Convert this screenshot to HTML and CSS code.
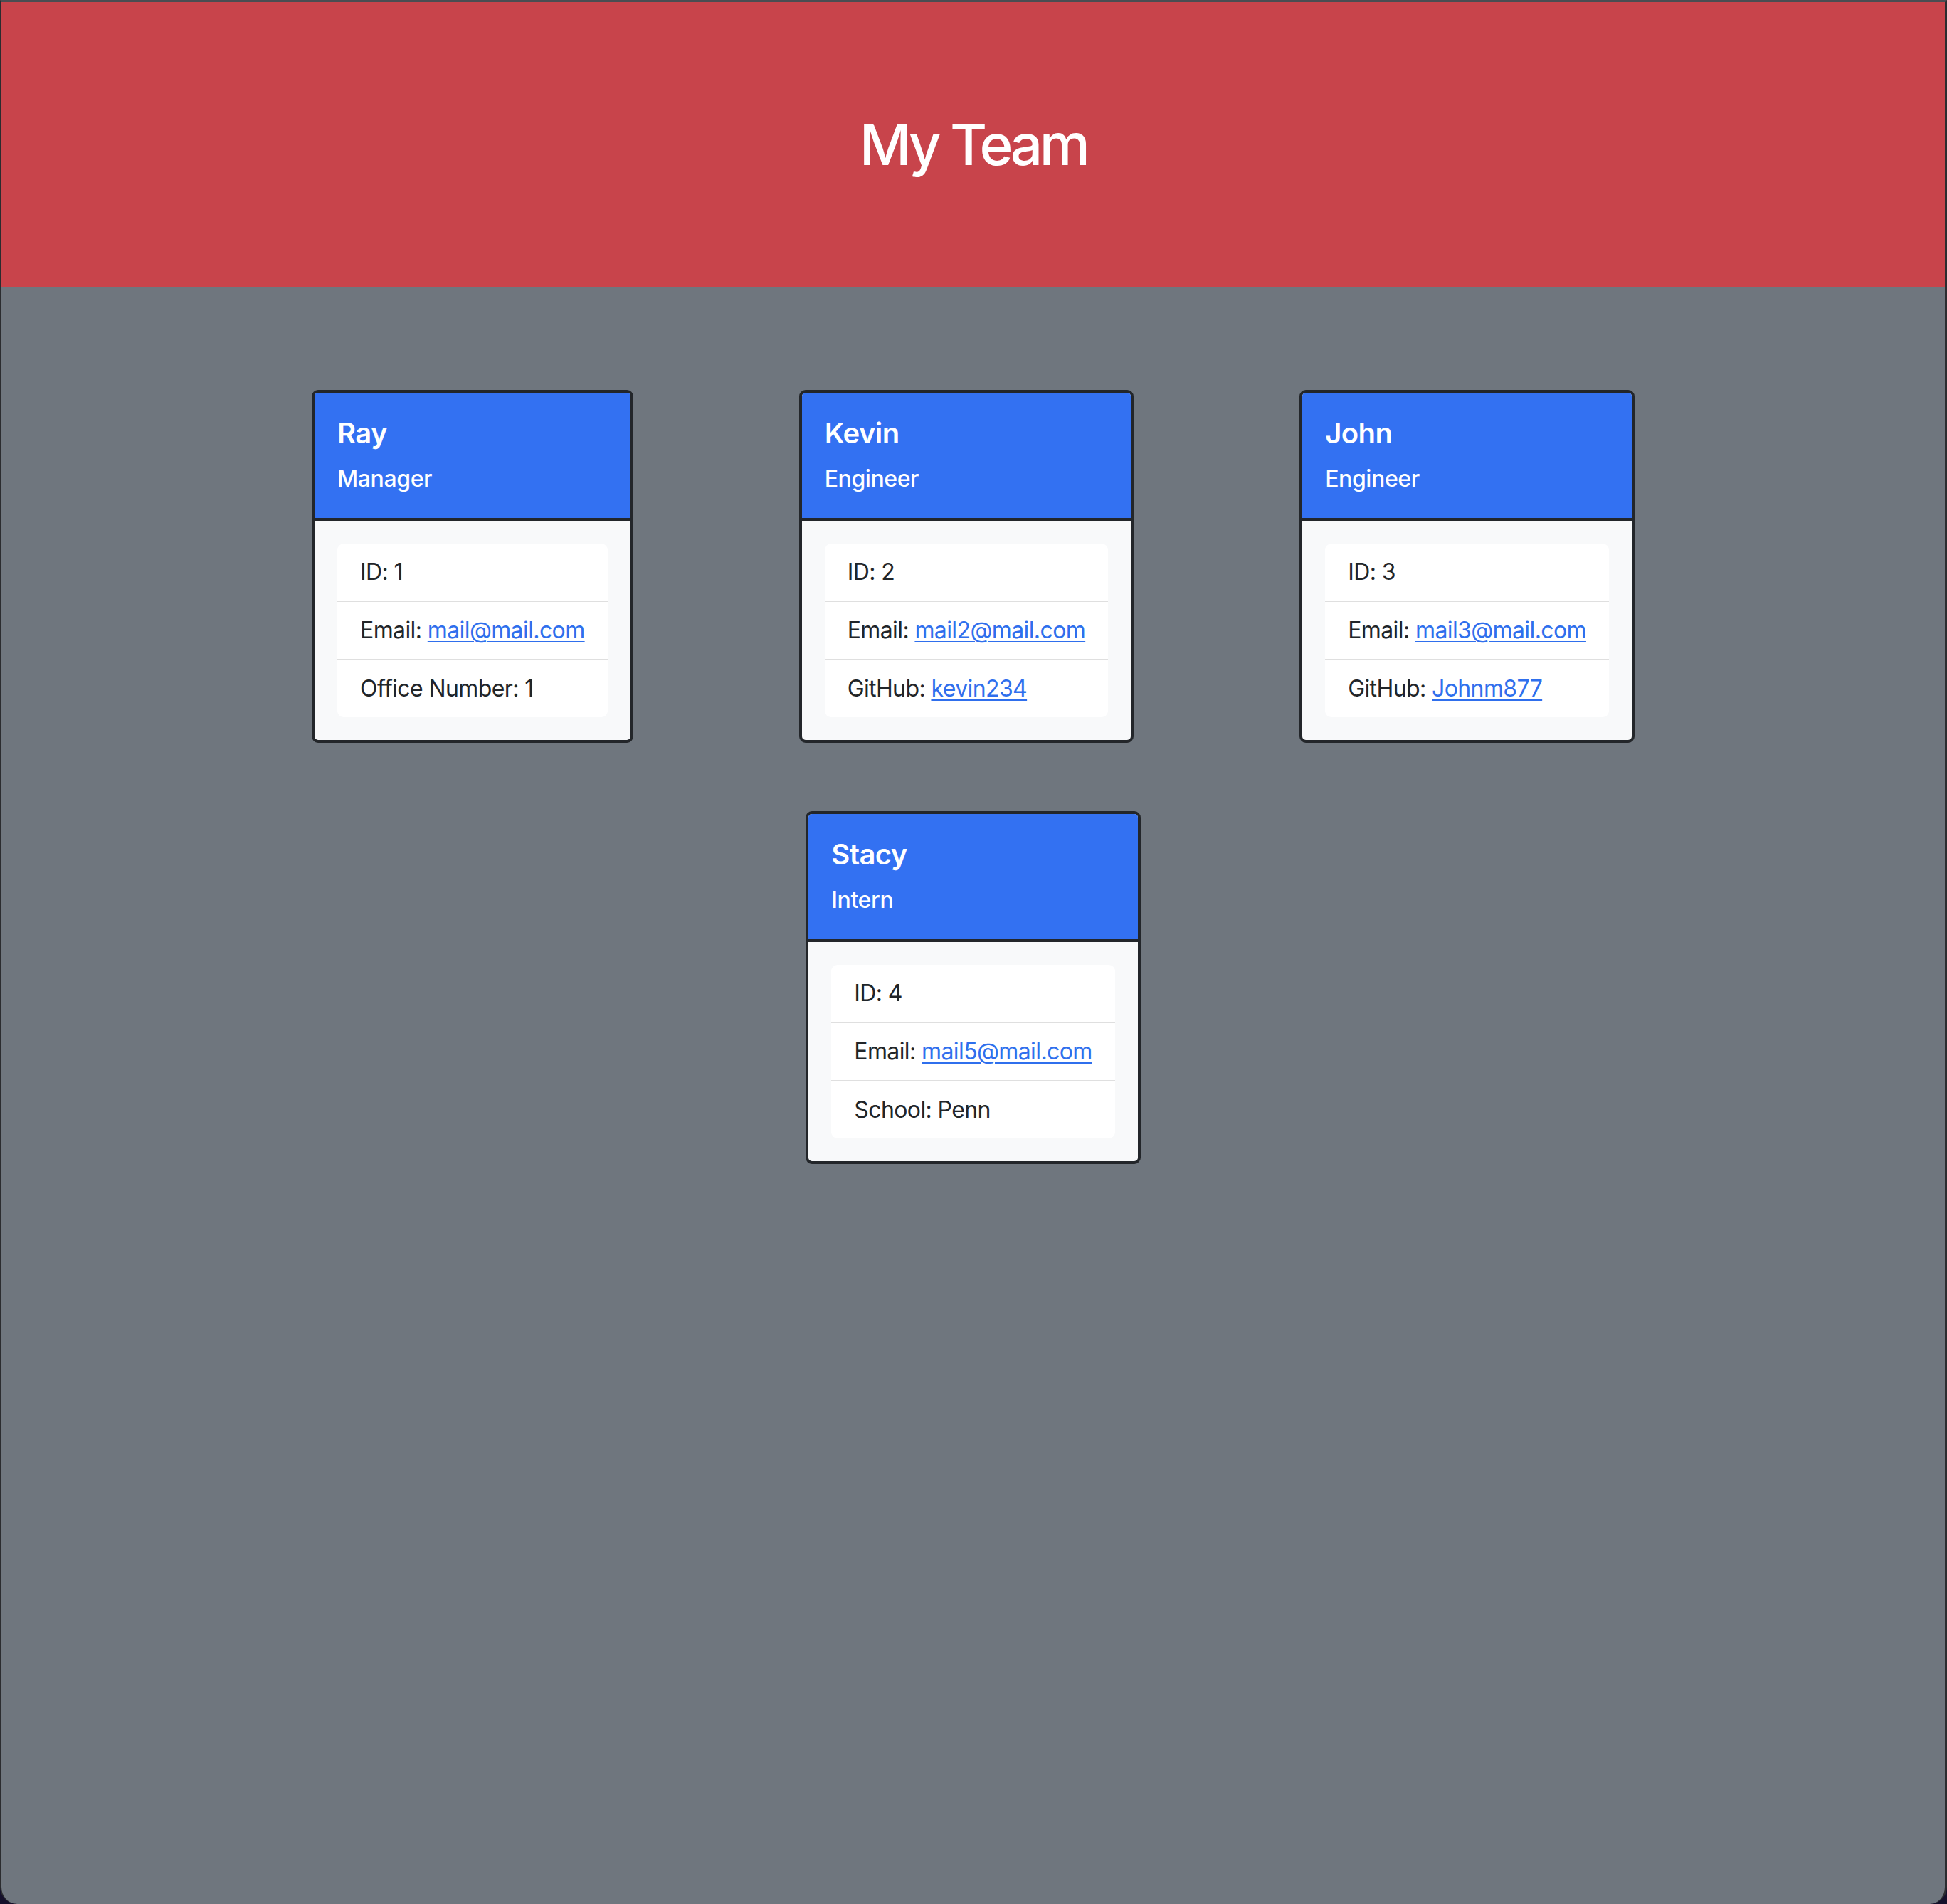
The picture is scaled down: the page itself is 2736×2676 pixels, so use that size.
FILE: index.html
```html
<!DOCTYPE html>
<html lang="en">
<head>
<meta charset="utf-8">
<title>My Team</title>
<link rel="stylesheet" href="styles.css">
</head>
<body>
<div class="window">
  <header class="hero">
    <h1 class="hero-title">My Team</h1>
  </header>
  <main class="team">
    <div class="card">
      <div class="card-header">
        <h5 class="card-title">Ray</h5>
        <h6 class="card-subtitle">Manager</h6>
      </div>
      <div class="card-body">
        <ul class="list">
          <li class="list-item">ID: 1</li>
          <li class="list-item">Email: <a href="#">mail@mail.com</a></li>
          <li class="list-item">Office Number: 1</li>
        </ul>
      </div>
    </div>
    <div class="card">
      <div class="card-header">
        <h5 class="card-title">Kevin</h5>
        <h6 class="card-subtitle">Engineer</h6>
      </div>
      <div class="card-body">
        <ul class="list">
          <li class="list-item">ID: 2</li>
          <li class="list-item">Email: <a href="#">mail2@mail.com</a></li>
          <li class="list-item">GitHub: <a href="#">kevin234</a></li>
        </ul>
      </div>
    </div>
    <div class="card">
      <div class="card-header">
        <h5 class="card-title">John</h5>
        <h6 class="card-subtitle">Engineer</h6>
      </div>
      <div class="card-body">
        <ul class="list">
          <li class="list-item">ID: 3</li>
          <li class="list-item">Email: <a href="#">mail3@mail.com</a></li>
          <li class="list-item">GitHub: <a href="#">Johnm877</a></li>
        </ul>
      </div>
    </div>
    <div class="card">
      <div class="card-header">
        <h5 class="card-title">Stacy</h5>
        <h6 class="card-subtitle">Intern</h6>
      </div>
      <div class="card-body">
        <ul class="list">
          <li class="list-item">ID: 4</li>
          <li class="list-item">Email: <a href="#">mail5@mail.com</a></li>
          <li class="list-item">School: Penn</li>
        </ul>
      </div>
    </div>
  </main>
</div>
</body>
</html>
```

FILE: styles.css
```css
* { box-sizing: border-box; }

html, body {
  margin: 0;
  padding: 0;
}

body {
  background: #15102b;
  font-family: Inter, "Noto Sans", "Liberation Sans", sans-serif;
  color: #212529;
}

.window {
  height: 2676px;
  background: #6f767e;
  border-top: 3px solid #4a4d52;
  border-left: 2px solid #2b2c2f;
  border-right: 3px solid #2b2c2f;
  border-radius: 0 0 24px 24px;
  overflow: hidden;
}

.hero {
  height: 400px;
  background: #c8444b;
  display: flex;
  align-items: center;
  justify-content: center;
}

.hero-title {
  margin: 0;
  color: #ffffff;
  font-size: 80px;
  font-weight: 500;
  line-height: 96px;
  letter-spacing: -4.5px;
}

.team {
  width: 2092px;
  margin: 0 auto;
  padding-top: 145px;
  display: flex;
  flex-wrap: wrap;
  justify-content: space-around;
  align-items: flex-start;
  row-gap: 96px;
}

.card {
  margin: 0 60px;
  border: 4px solid #23262a;
  border-radius: 9px;
  background: #f8f9fa;
  overflow: hidden;
}

.card-header {
  background: #3371f2;
  color: #ffffff;
  padding: 33px 32px 36px;
  border-bottom: 4px solid #23262a;
}

.card-title {
  margin: 0 0 21px;
  font-size: 40px;
  line-height: 48px;
  font-weight: 600;
  letter-spacing: -0.6px;
}

.card-subtitle {
  margin: 0;
  font-size: 32px;
  line-height: 38px;
  font-weight: 500;
  letter-spacing: -0.4px;
}

.card-body {
  padding: 32px;
}

.list {
  list-style: none;
  margin: 0;
  padding: 0;
  background: #ffffff;
  border-radius: 9px;
}

.list-item {
  padding: 16px 32px;
  font-size: 32px;
  line-height: 48px;
  white-space: nowrap;
  letter-spacing: -0.6px;
  border-bottom: 2px solid #dfdfdf;
}

.list-item:last-child {
  border-bottom: none;
}

.list-item a {
  color: #2f6fed;
  text-decoration: underline;
  text-decoration-thickness: 2px;
  text-underline-offset: 4px;
}
```
